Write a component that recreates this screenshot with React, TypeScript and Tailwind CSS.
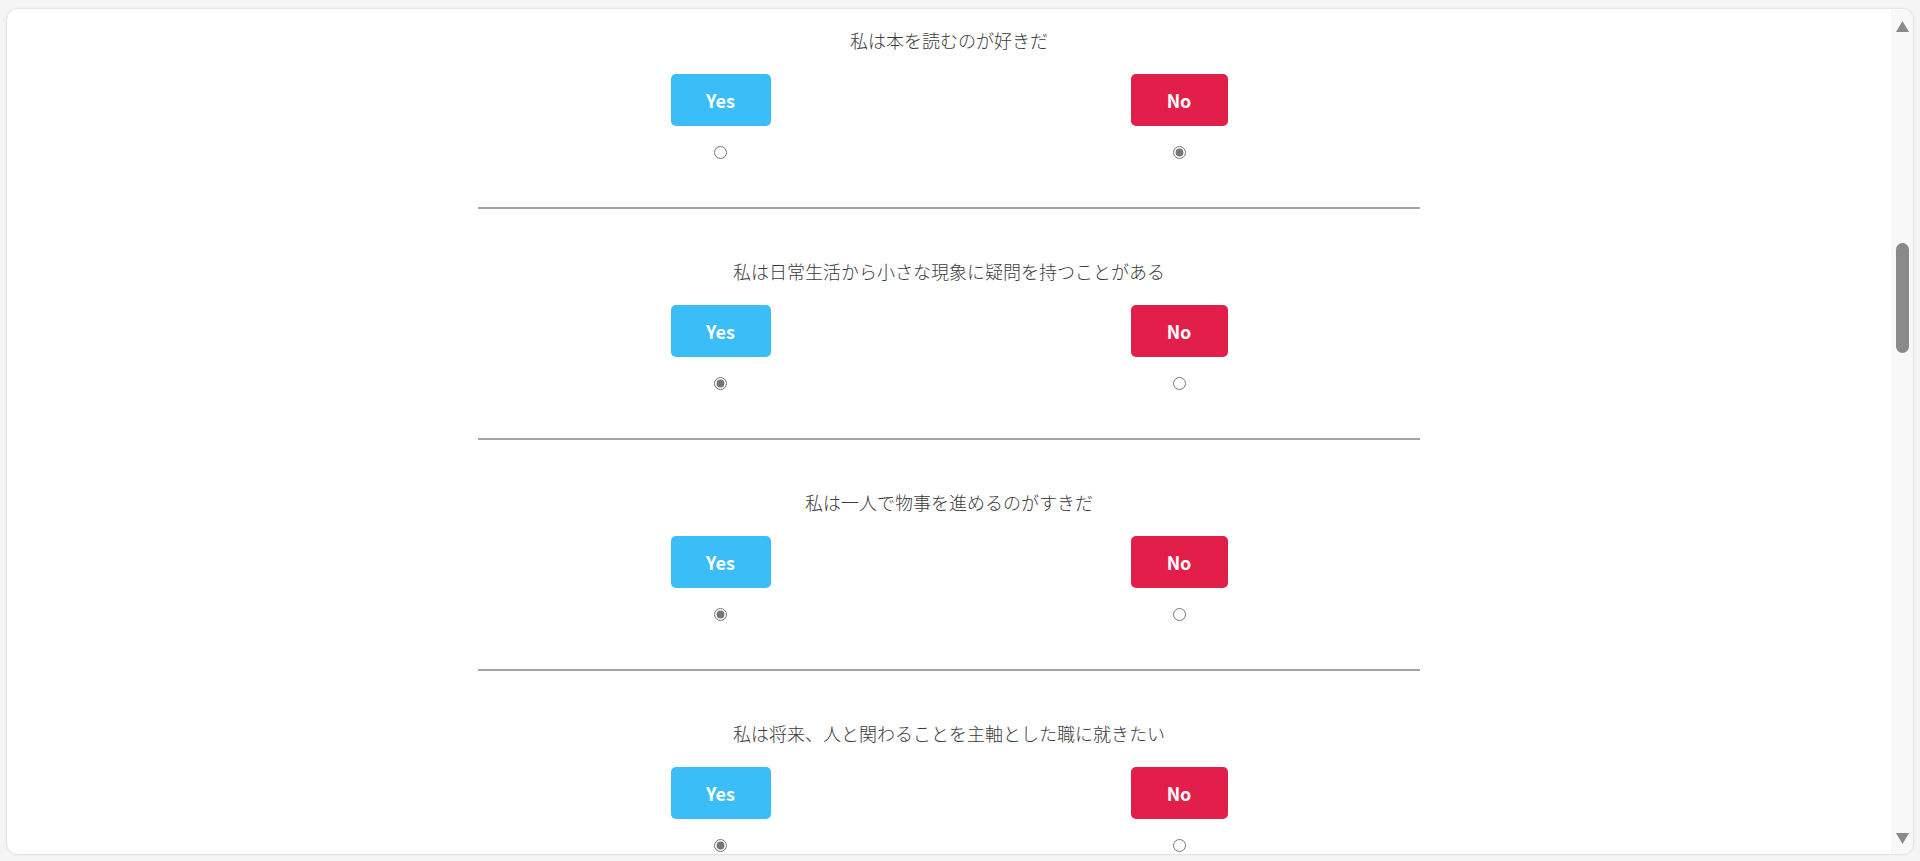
import React from 'react';

const questions = [
  { text: '私は本を読むのが好きだ', answer: 'no' },
  { text: '私は日常生活から小さな現象に疑問を持つことがある', answer: 'yes' },
  { text: '私は一人で物事を進めるのがすきだ', answer: 'yes' },
  { text: '私は将来、人と関わることを主軸とした職に就きたい', answer: 'yes' },
];

function Question({ q, index }: { q: { text: string; answer: string }; index: number }) {
  return (
    <div className={index === 0 ? 'pt-[20px] pb-[48px]' : 'pt-[51px] pb-[48px]'}>
      <p className="text-center text-[18px] font-light leading-[23px] text-[#3a3a3a]">{q.text}</p>
      <div className="mt-[22px] w-[557px] mx-auto flex justify-between">
        <div className="flex flex-col items-center">
          <button className="w-[100px] h-[52px] rounded-[5px] bg-[#3bbef8] text-white text-[18px] font-bold">
            Yes
          </button>
          <input
            type="radio"
            name={`q${index}`}
            defaultChecked={q.answer === 'yes'}
            className="mt-[20px] m-0 w-[13px] h-[13px] accent-[#767676]"
          />
        </div>
        <div className="flex flex-col items-center">
          <button className="w-[97px] h-[52px] rounded-[5px] bg-[#e21e4a] text-white text-[18px] font-bold">
            No
          </button>
          <input
            type="radio"
            name={`q${index}`}
            defaultChecked={q.answer === 'no'}
            className="mt-[20px] m-0 w-[13px] h-[13px] accent-[#767676]"
          />
        </div>
      </div>
    </div>
  );
}

export default function App() {
  return (
    <div
      className="h-screen bg-[#f5f5f5] pt-[8px] px-[6px] pb-[6px] flex"
      style={{ fontFamily: '"Noto Sans CJK JP", "Noto Sans", sans-serif' }}
    >
      <div className="flex-1 flex bg-white border border-[#e4e4e4] rounded-[12px] overflow-hidden shadow-[0_0_3px_rgba(0,0,0,0.06)]">
        <main className="flex-1 overflow-hidden">
          <div className="w-[942px] mx-auto">
            {questions.map((q, i) => (
              <div key={i}>
                {i > 0 && <div className="h-[2px] bg-[#a0a4ad]" />}
                <Question q={q} index={i} />
              </div>
            ))}
          </div>
        </main>

        {/* scrollbar */}
        <div className="w-[22px] bg-[#f8f8f8] flex flex-col items-center pt-[12px] pb-[10px]">
          <svg width="13" height="11" viewBox="0 0 13 11">
            <polygon points="6.5,0 13,11 0,11" fill="#8a8a8a" />
          </svg>
          <div className="mt-[211px] w-[13px] h-[110px] rounded-full bg-[#8a8a8a]" />
          <div className="flex-1" />
          <svg width="13" height="11" viewBox="0 0 13 11">
            <polygon points="0,0 13,0 6.5,11" fill="#8a8a8a" />
          </svg>
        </div>
      </div>
    </div>
  );
}
